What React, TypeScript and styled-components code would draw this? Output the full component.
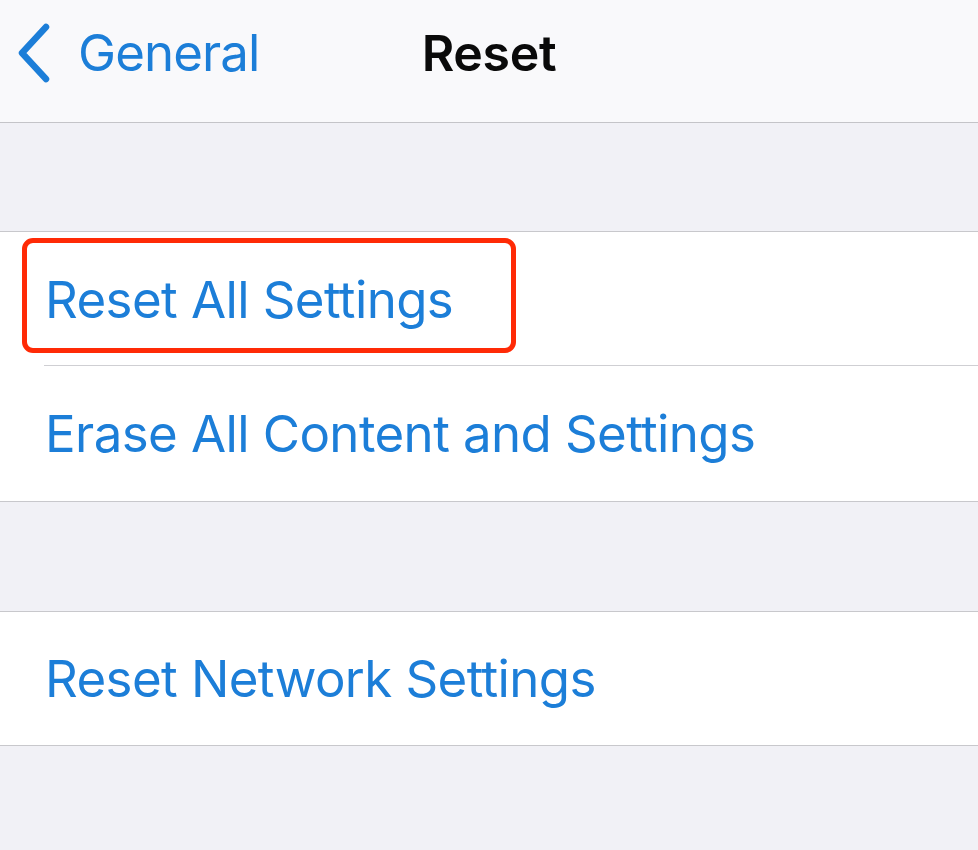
import React from "react";
import styled, { createGlobalStyle } from "styled-components";

const Global = createGlobalStyle`
  html, body { margin: 0; padding: 0; background: #f1f1f6; }
  body { font-family: Inter, "Liberation Sans", sans-serif; -webkit-font-smoothing: antialiased; }
`;

const Page = styled.div`
  width: 978px;
  height: 850px;
  background: #f1f1f6;
  overflow: hidden;
  display: flex;
  flex-direction: column;
`;

const NavBar = styled.header`
  height: 123px;
  flex: none;
  box-sizing: border-box;
  padding-bottom: 17px;
  background: #f9f9fb;
  border-bottom: 1px solid #c4c4c8;
  display: grid;
  grid-template-columns: 1fr auto 1fr;
  align-items: center;
`;

const Back = styled.div`
  display: flex;
  align-items: center;
  gap: 24px;
  padding-left: 18px;
  color: #1c7ed8;
  font-size: 51px;
  font-weight: 400;
  letter-spacing: -0.9px;
`;

const Title = styled.div`
  font-size: 50px;
  font-weight: 600;
  color: #0a0a0a;
  letter-spacing: -0.3px;
`;

const Spacer = styled.div<{ $h: number }>`
  height: ${(p) => p.$h}px;
  flex: none;
`;

const Group = styled.section`
  flex: none;
  background: #ffffff;
  border-top: 1px solid #c8c8cc;
  border-bottom: 1px solid #c8c8cc;
`;

const Row = styled.div<{ $h: number; $sep?: boolean }>`
  position: relative;
  box-sizing: border-box;
  height: ${(p) => p.$h}px;
  display: flex;
  align-items: center;
  padding-left: 45px;
  color: #1c7ed8;
  font-size: 51px;
  letter-spacing: -0.6px;
  &::after {
    content: "";
    display: ${(p) => (p.$sep ? "block" : "none")};
    position: absolute;
    left: 44px;
    right: 0;
    bottom: 0;
    height: 1px;
    background: #cfcfd3;
  }
`;

const Highlight = styled.div`
  position: absolute;
  left: 22px;
  top: 6px;
  width: 494px;
  height: 115px;
  box-sizing: border-box;
  border: 5px solid #ff2a06;
  border-radius: 11px;
`;

const Chevron = () => (
  <svg width="36" height="60" viewBox="0 0 36 60" fill="none">
    <path d="M28 4 L4 30 L28 56" stroke="#1c7ed8" strokeWidth="6.5" strokeLinecap="round" strokeLinejoin="round" />
  </svg>
);

export default function App() {
  return (
    <Page>
      <Global />
      <NavBar>
        <Back>
          <Chevron />
          <span>General</span>
        </Back>
        <Title>Reset</Title>
        <div />
      </NavBar>
      <Spacer $h={108} />
      <Group>
        <Row $h={134} $sep>
          Reset All Settings
          <Highlight />
        </Row>
        <Row $h={135}>Erase All Content and Settings</Row>
      </Group>
      <Spacer $h={109} />
      <Group>
        <Row $h={133}>Reset Network Settings</Row>
      </Group>
    </Page>
  );
}
